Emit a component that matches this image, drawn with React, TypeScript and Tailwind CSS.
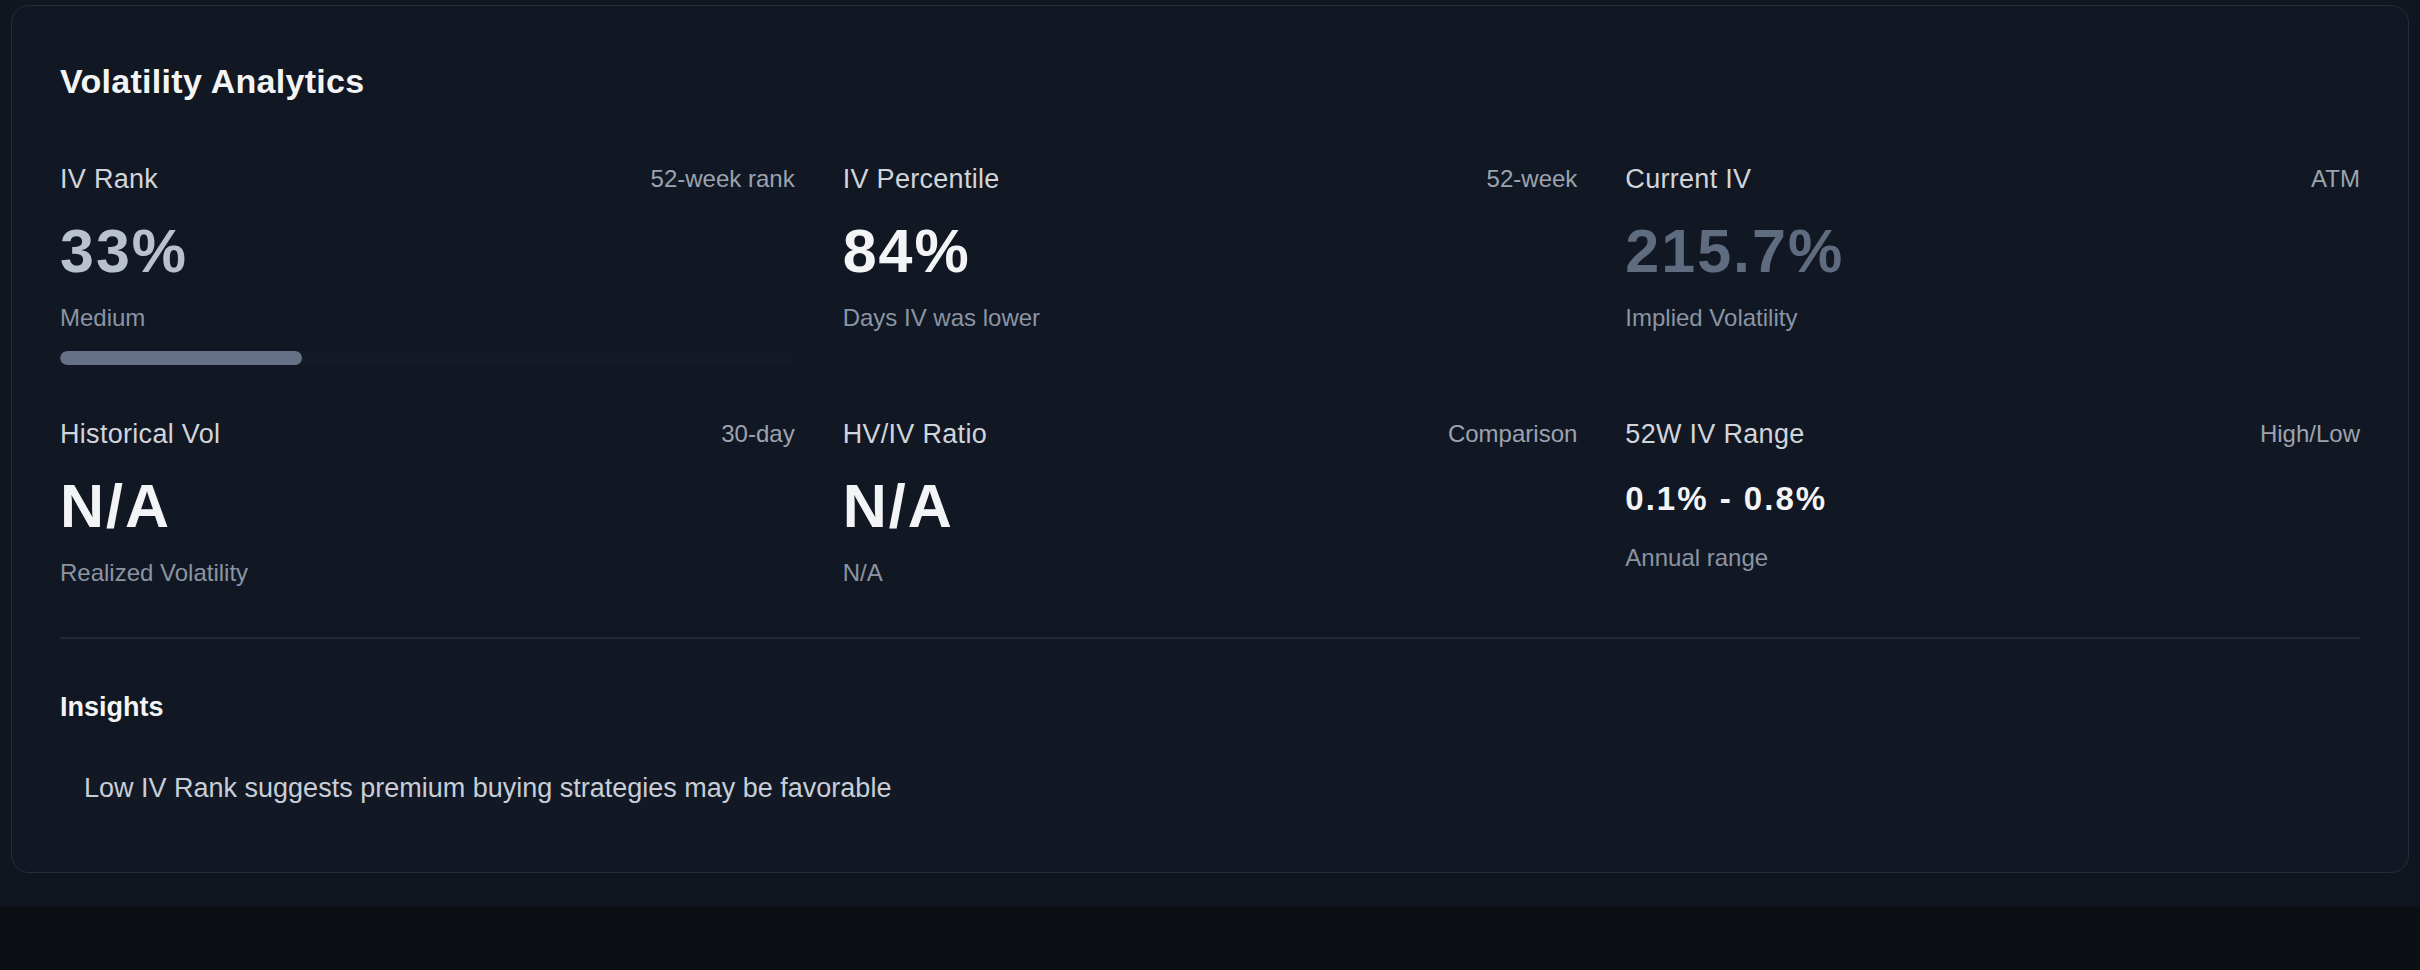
import React from "react";

type Cell = {
  label: string;
  hint: string;
  value: string;
  valueClass: string;
  sub: string;
  bar?: number;
  small?: boolean;
};

const cells: Cell[] = [
  { label: "IV Rank", hint: "52-week rank", value: "33%", valueClass: "text-[#b9c1cc]", sub: "Medium", bar: 33 },
  { label: "IV Percentile", hint: "52-week", value: "84%", valueClass: "text-[#f3f4f6]", sub: "Days IV was lower" },
  { label: "Current IV", hint: "ATM", value: "215.7%", valueClass: "text-[#5f6b7f]", sub: "Implied Volatility" },
  { label: "Historical Vol", hint: "30-day", value: "N/A", valueClass: "text-[#f3f4f6]", sub: "Realized Volatility" },
  { label: "HV/IV Ratio", hint: "Comparison", value: "N/A", valueClass: "text-[#f3f4f6]", sub: "N/A" },
  { label: "52W IV Range", hint: "High/Low", value: "0.1% - 0.8%", valueClass: "text-[#f3f4f6]", sub: "Annual range", small: true },
];

function Metric({ c }: { c: Cell }) {
  return (
    <div className="flex flex-col">
      <div className="flex items-center justify-between h-[36px]">
        <span className="text-[27px] leading-[36px] tracking-[0.3px] text-[#d1d5db]">{c.label}</span>
        <span className="text-[24px] leading-[36px] text-[#9ca3af]">{c.hint}</span>
      </div>
      {c.small ? (
        <>
          <div className={`mt-[25px] text-[33px] leading-[44px] font-bold tracking-[2px] ${c.valueClass}`}>{c.value}</div>
          <div className="mt-[21px] text-[24px] leading-[32px] text-[#8b94a3]">{c.sub}</div>
        </>
      ) : (
        <>
          <div className={`mt-[18px] text-[61px] leading-[72px] font-bold tracking-[2px] ${c.valueClass}`}>{c.value}</div>
          <div className="mt-[15px] text-[24px] leading-[32px] text-[#8b94a3]">{c.sub}</div>
        </>
      )}
      {c.bar !== undefined && (
        <div className="mt-[17px] h-[14px] w-full rounded-full bg-[#131a25] overflow-hidden">
          <div className="h-full rounded-full bg-[#647186]" style={{ width: `${c.bar}%` }} />
        </div>
      )}
    </div>
  );
}

export default function App() {
  return (
    <div
      className="min-h-screen bg-[#0c1015]"
      style={{ fontFamily: '"Liberation Sans", Arial, sans-serif' }}
    >
      <div className="bg-[#10161f] px-[11px] pt-[5px] pb-[33px]">
        <div className="rounded-[18px] border border-[#272d38] bg-[#111823] px-[48px] pt-[53px] pb-[48px]">
          <h2 className="text-[34px] leading-[44px] font-bold tracking-[0.3px] text-[#f3f4f6]">Volatility Analytics</h2>
          <div className="mt-[58px] grid grid-cols-3 gap-x-[48px] gap-y-[51px]">
            {cells.map((c) => (
              <Metric key={c.label} c={c} />
            ))}
          </div>
          <div className="mt-[48px] h-[2px] bg-[#242a34]" />
          <div className="mt-[50px] text-[27px] leading-[36px] font-bold text-[#f3f4f6]">Insights</div>
          <div className="mt-[27px] rounded-[12px] bg-[#121925] px-[24px] py-[18px]">
            <p className="text-[27px] leading-[36px] text-[#c8ced8]">
              Low IV Rank suggests premium buying strategies may be favorable
            </p>
          </div>
        </div>
      </div>
    </div>
  );
}
